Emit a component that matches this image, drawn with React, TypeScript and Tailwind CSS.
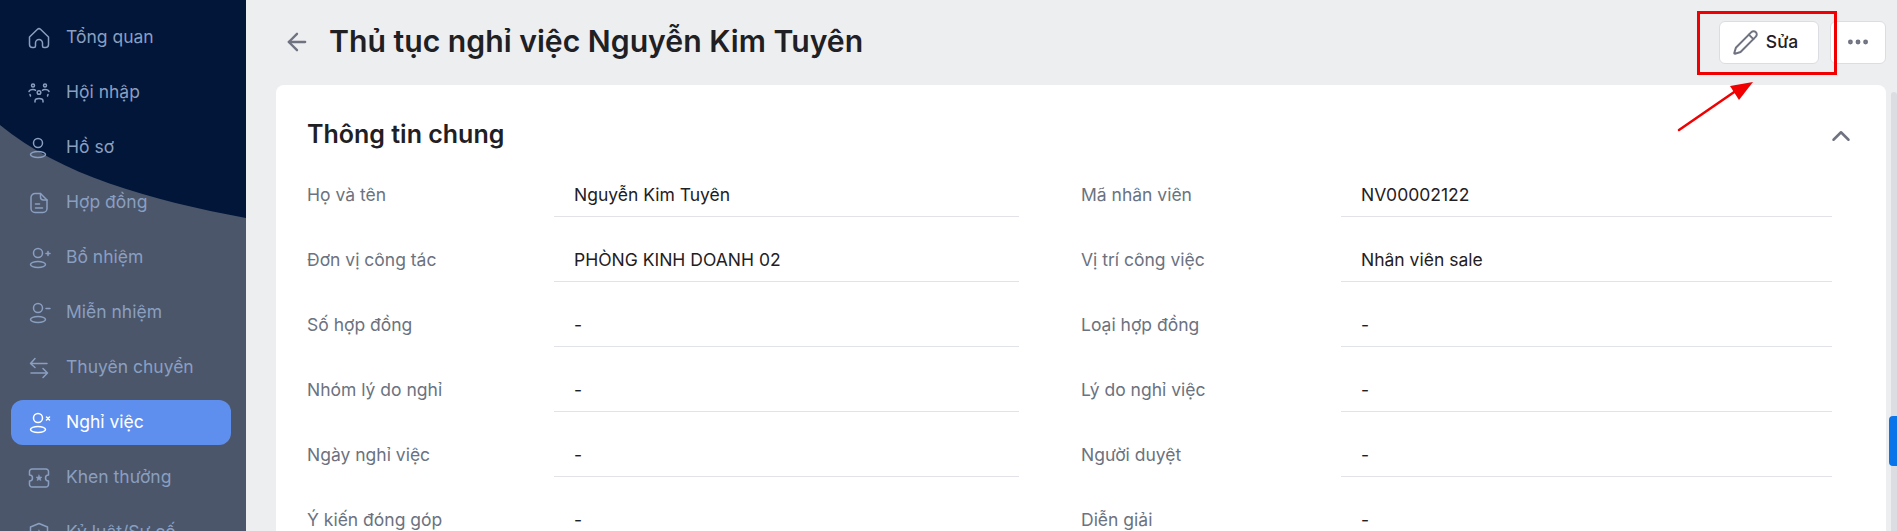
import React from 'react';
import { ArrowLeft, ChevronUp, Ellipsis, Pencil } from 'lucide-react';

type IconProps = { className?: string };

const Svg = ({ className, children }: IconProps & { children: React.ReactNode }) => (
  <svg width="24" height="24" viewBox="0 0 24 24" fill="none" stroke="currentColor" strokeWidth="1.5" strokeLinecap="round" strokeLinejoin="round" className={className}>
    {children}
  </svg>
);

const HomeIcon = (p: IconProps) => (
  <Svg {...p}>
    <path d="M2.500 11 10.500 3.300a2.200 2.200 0 0 1 3 0L21.500 11v7.500a3 3 0 0 1-3 3H17a1.500 1.500 0 0 1-1.500-1.500v-3a3.500 3.500 0 0 0-7 0v3A1.500 1.500 0 0 1 7 21.500H5.500a3 3 0 0 1-3-3z" />
  </Svg>
);

const TeamIcon = (p: IconProps) => (
  <Svg {...p}>
    <circle cx="12" cy="11.500" r="1.800" />
    <circle cx="6" cy="4.500" r="1.500" />
    <circle cx="18" cy="4.500" r="1.500" />
    <path d="M2 10.500c.5-1.500 2-2 4-2 1 0 2 .2 2.500.8M22 10.500c-.5-1.500-2-2-4-2-1 0-2 .2-2.500.8M8 21v-1c0-1.500 1.500-2.500 4-2.500s4 1 4 2.500v1M3 13.500l.5 1.500M21 13.500l-.5 1.500" />
  </Svg>
);

const PersonIcon = ({ className, extra }: IconProps & { extra?: React.ReactNode }) => (
  <Svg className={className}>
    <circle cx="11" cy="7" r="4.500" />
    <ellipse cx="11" cy="18.500" rx="7.500" ry="3" />
    {extra}
  </Svg>
);

const FileIcon = (p: IconProps) => (
  <Svg {...p}>
    <path d="M13.500 2.500H8a4 4 0 0 0-4 4v11a4 4 0 0 0 4 4h8a4 4 0 0 0 4-4V9z" />
    <path d="M13.500 2.500v3.500a3 3 0 0 0 3 3H20M8.500 13h4M8.500 17h7" />
  </Svg>
);

const TransferIcon = (p: IconProps) => (
  <Svg {...p}>
    <path d="M8 2.500 3.500 7.500 8 11.500M3.500 7.500H20M16 12.500l4.500 4.500L16 21.500M20.500 17H4" />
  </Svg>
);

const TicketIcon = (p: IconProps) => (
  <Svg {...p}>
    <path d="M5 3h14a2.500 2.500 0 0 1 2.500 2.500V9a3 3 0 0 0 0 6v3.500A2.500 2.500 0 0 1 19 21H5a2.500 2.500 0 0 1-2.500-2.500V15a3 3 0 0 0 0-6V5.500A2.500 2.500 0 0 1 5 3z" />
    <path d="m12 9 .9 1.900 2.100.3-1.500 1.400.4 2-1.900-1-1.900 1 .4-2L9 11.200l2.100-.3z" fill="currentColor" strokeWidth="0.500" />
  </Svg>
);

const ShieldIcon = (p: IconProps) => (
  <Svg {...p}>
    <path d="M12 2.500 20.500 6v7c0 4.500-4 7.500-8.500 9-4.500-1.500-8.500-4.500-8.500-9V6z" />
    <path d="m12 9 .9 1.900 2.100.3-1.500 1.400.4 2-1.900-1-1.900 1 .4-2L9 11.200l2.100-.3z" fill="currentColor" strokeWidth="0.500" />
  </Svg>
);

const menu = [
  { label: 'Tổng quan', icon: <HomeIcon /> },
  { label: 'Hội nhập', icon: <TeamIcon /> },
  { label: 'Hồ sơ', icon: <PersonIcon /> },
  { label: 'Hợp đồng', icon: <FileIcon /> },
  { label: 'Bổ nhiệm', icon: <PersonIcon extra={<path d="M19 7.500h4M21 5.500v4" />} /> },
  { label: 'Miễn nhiệm', icon: <PersonIcon extra={<path d="M19 7.500h4" />} /> },
  { label: 'Thuyên chuyển', icon: <TransferIcon /> },
  { label: 'Nghỉ việc', icon: <PersonIcon extra={<path d="m19.500 6 3 3M22.500 6l-3 3" />} />, active: true },
  { label: 'Khen thưởng', icon: <TicketIcon /> },
  { label: 'Kỷ luật/Sự cố', icon: <ShieldIcon /> },
];

const rows = [
  ['Họ và tên', 'Nguyễn Kim Tuyên', 'Mã nhân viên', 'NV00002122'],
  ['Đơn vị công tác', 'PHÒNG KINH DOANH 02', 'Vị trí công việc', 'Nhân viên sale'],
  ['Số hợp đồng', '-', 'Loại hợp đồng', '-'],
  ['Nhóm lý do nghỉ', '-', 'Lý do nghỉ việc', '-'],
  ['Ngày nghỉ việc', '-', 'Người duyệt', '-'],
  ['Ý kiến đóng góp', '-', 'Diễn giải', '-'],
];

const Sidebar = () => (
  <aside className="relative w-[246px] shrink-0 overflow-hidden bg-[#4b566b]">
    <svg className="absolute left-0 top-0" width="246" height="220" viewBox="0 0 246 220">
      <path d="M0 0H246V218C150 200 60 175 0 125Z" fill="#011638" />
    </svg>
    <nav className="relative flex flex-col items-stretch gap-[10px] pl-[11px] pr-[15px] pt-[15px]">
      {menu.map((item) => (
        <div
          key={item.label}
          className={`flex h-[45px] shrink-0 items-center gap-[15px] rounded-[12px] pl-[16px] text-[17.5px] ${item.active ? 'bg-[#5f8fee] text-white' : 'text-[#8a9fc0]'}`}
        >
          {item.icon}
          <span>{item.label}</span>
        </div>
      ))}
    </nav>
  </aside>
);

const DetailRow = ({ row }: { row: string[] }) => (
  <div className="flex h-[65px] shrink-0 text-[17.5px]">
    <div className="w-[247px] pt-[1px] leading-[38px] text-[#6b7280]">{row[0]}</div>
    <div className="h-[42px] w-[465px] border-b border-[#e2e3e8] pl-[20px] pt-[1px] leading-[38px] text-[#1f2024]">{row[1]}</div>
    <div className="ml-[62px] w-[260px] pt-[1px] leading-[38px] text-[#6b7280]">{row[2]}</div>
    <div className="h-[42px] w-[491px] border-b border-[#e2e3e8] pl-[20px] pt-[1px] leading-[38px] text-[#1f2024]">{row[3]}</div>
  </div>
);

export default function App() {
  return (
    <div className="relative flex h-[531px] w-[1897px] overflow-hidden bg-[#edeef0] font-['Inter',sans-serif]">
      <Sidebar />
      <main className="flex min-w-0 flex-1 flex-col">
        <header className="flex h-[85px] shrink-0 items-center pb-[1px] pl-[37px] pr-[11px]">
          <ArrowLeft size={28} strokeWidth={2} className="text-[#6f7280]" />
          <h1 className="ml-[18px] text-[30.2px] font-semibold text-[#1f2024]">Thủ tục nghỉ việc Nguyễn Kim Tuyên</h1>
          <button className="ml-auto flex h-[43px] w-[100px] items-center justify-center gap-[7px] rounded-[6px] border border-[#dcdde3] bg-white pr-[8px] text-[17.5px] font-medium text-[#1f2024]">
            <Pencil size={27} strokeWidth={1.75} className="text-[#6f7280]" />
            Sửa
          </button>
          <button className="ml-[11px] flex h-[43px] w-[56px] items-center justify-center rounded-[6px] border border-[#dcdde3] bg-white text-[#6f7280]">
            <Ellipsis size={26} strokeWidth={2.5} />
          </button>
        </header>
        <div className="flex min-h-0 flex-1 pl-[30px]">
          <section className="w-[1610px] shrink-0 rounded-t-[8px] bg-white pl-[31px]">
            <div className="flex h-[66px] items-end justify-between pr-[30px]">
              <h2 className="text-[25px] font-semibold leading-[34px] text-[#1f2024]">Thông tin chung</h2>
              <ChevronUp size={30} strokeWidth={2} className="text-[#6f7280]" />
            </div>
            <div className="flex flex-col pt-[24px]">
              {rows.map((row) => (
                <DetailRow key={row[0]} row={row} />
              ))}
            </div>
          </section>
          <div className="ml-[5px] mt-[7px] w-[6px] rounded-t-[4px] bg-[#dcdde3]" />
        </div>
      </main>
      {/* scrollbar thumb */}
      <div className="absolute left-[1889px] top-[416px] h-[50px] w-[8px] rounded-l-[4px] bg-[#0a74ea]" />
      {/* red annotation */}
      <div className="absolute left-[1697px] top-[11px] h-[64px] w-[140px] border-[3px] border-[#f00000]" />
      <svg className="absolute left-[1670px] top-[74px]" width="90" height="64" viewBox="0 0 90 64">
        <path d="M9 56 70 14" stroke="#f00000" strokeWidth="2.500" strokeLinecap="round" />
        <path d="M83 8 60 12 69 26Z" fill="#f00000" />
      </svg>
    </div>
  );
}
